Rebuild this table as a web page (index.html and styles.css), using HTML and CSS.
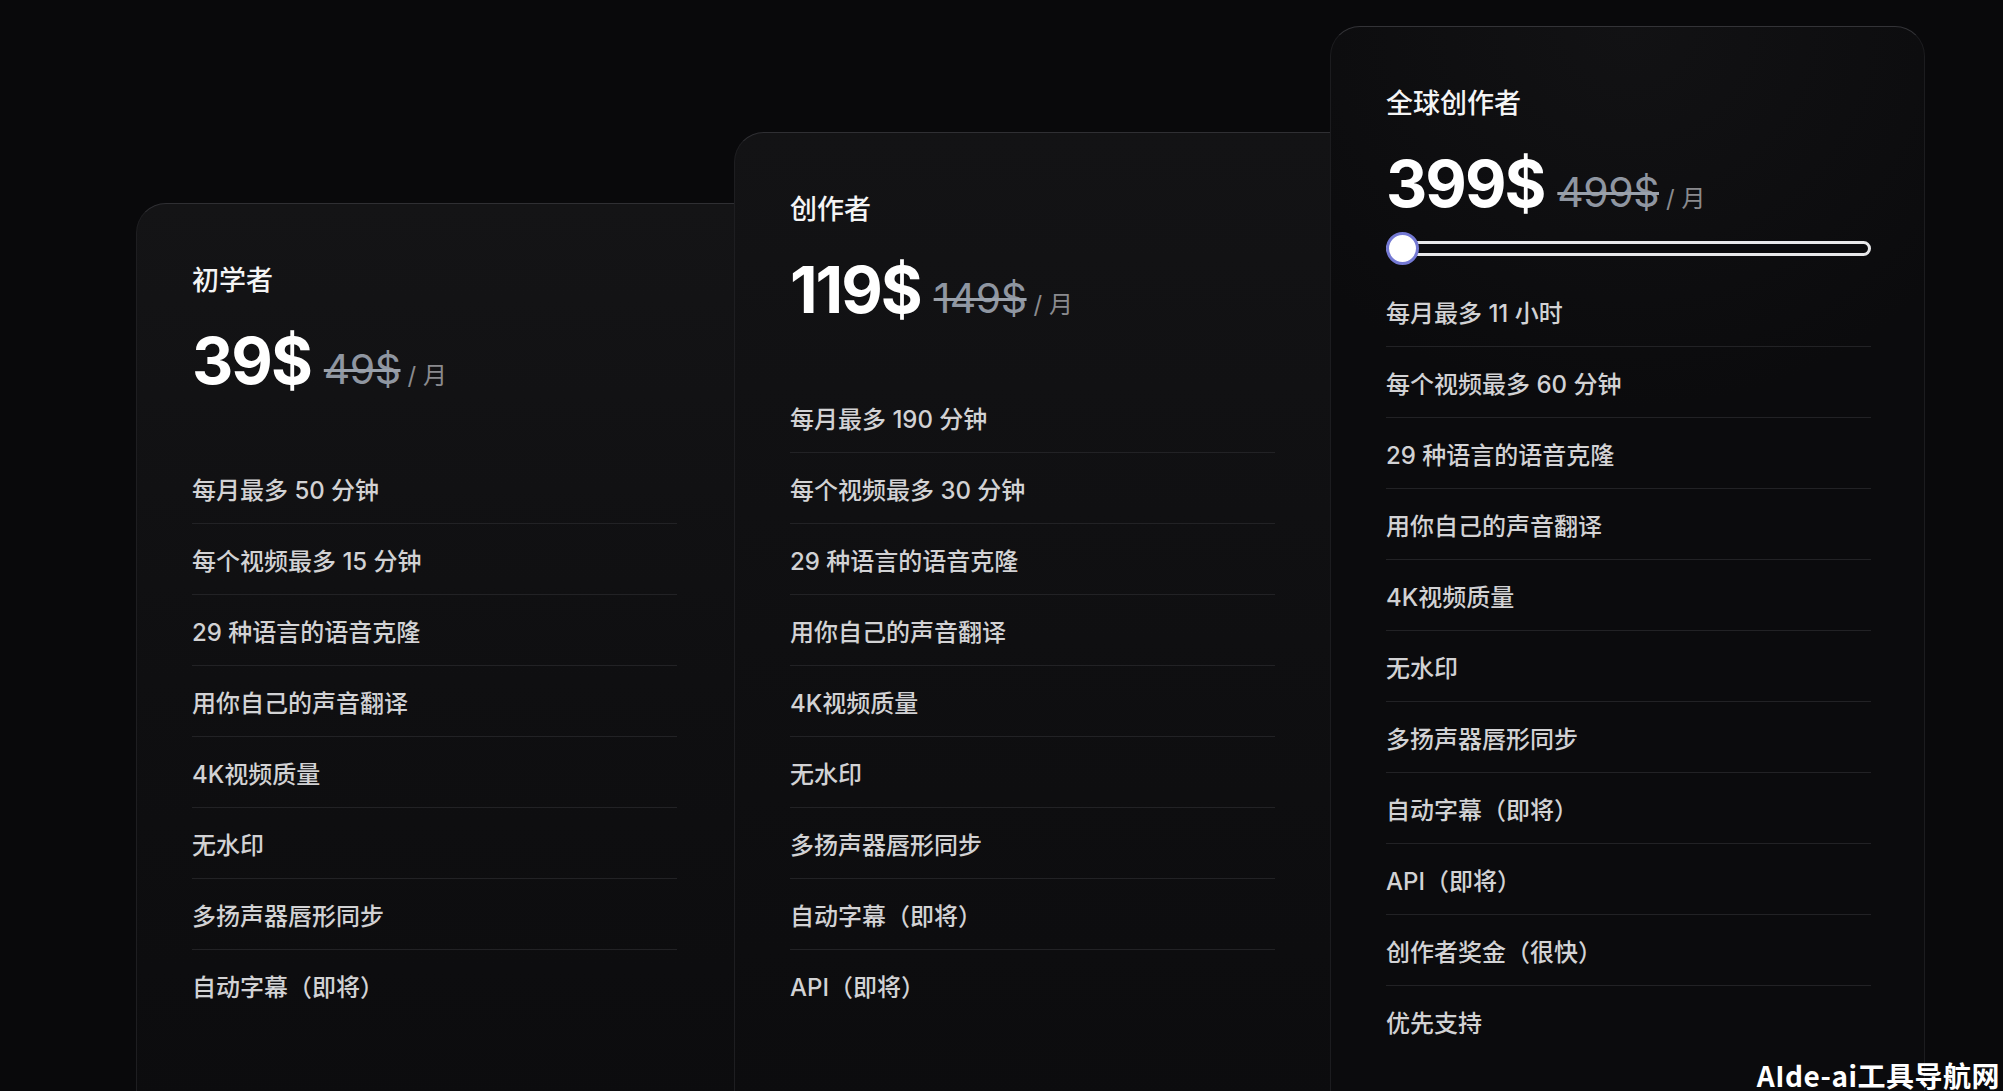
FILE: index.html
```html
<!DOCTYPE html>
<html lang="zh">
<head>
<meta charset="utf-8">
<title>定价</title>
<link rel="stylesheet" href="styles.css">
</head>
<body>
<main class="pricing">
  <section class="card card--starter">
    <h2 class="card-title">初学者</h2>
    <div class="price">
      <span class="price-now">39$</span>
      <span class="price-old">49$</span>
      <span class="price-unit">/ 月</span>
    </div>
    <div class="slider slider--hidden" aria-hidden="true">
      <div class="slider-track"></div>
      <div class="slider-thumb"></div>
    </div>
    <ul class="features">
      <li>每月最多 50 分钟</li>
      <li>每个视频最多 15 分钟</li>
      <li>29 种语言的语音克隆</li>
      <li>用你自己的声音翻译</li>
      <li>4K视频质量</li>
      <li>无水印</li>
      <li>多扬声器唇形同步</li>
      <li>自动字幕（即将）</li>
    </ul>
  </section>

  <section class="card card--creator">
    <h2 class="card-title">创作者</h2>
    <div class="price">
      <span class="price-now">119$</span>
      <span class="price-old">149$</span>
      <span class="price-unit">/ 月</span>
    </div>
    <div class="slider slider--hidden" aria-hidden="true">
      <div class="slider-track"></div>
      <div class="slider-thumb"></div>
    </div>
    <ul class="features">
      <li>每月最多 190 分钟</li>
      <li>每个视频最多 30 分钟</li>
      <li>29 种语言的语音克隆</li>
      <li>用你自己的声音翻译</li>
      <li>4K视频质量</li>
      <li>无水印</li>
      <li>多扬声器唇形同步</li>
      <li>自动字幕（即将）</li>
      <li>API（即将）</li>
    </ul>
  </section>

  <section class="card card--global">
    <h2 class="card-title">全球创作者</h2>
    <div class="price">
      <span class="price-now">399$</span>
      <span class="price-old">499$</span>
      <span class="price-unit">/ 月</span>
    </div>
    <div class="slider">
      <div class="slider-track"></div>
      <div class="slider-thumb"></div>
    </div>
    <ul class="features">
      <li>每月最多 11 小时</li>
      <li>每个视频最多 60 分钟</li>
      <li>29 种语言的语音克隆</li>
      <li>用你自己的声音翻译</li>
      <li>4K视频质量</li>
      <li>无水印</li>
      <li>多扬声器唇形同步</li>
      <li>自动字幕（即将）</li>
      <li>API（即将）</li>
      <li>创作者奖金（很快）</li>
      <li>优先支持</li>
    </ul>
  </section>
</main>
<div class="watermark">AIde-ai工具导航网</div>
</body>
</html>
```

FILE: styles.css
```css
html, body {
  margin: 0;
  padding: 0;
  height: 100%;
}

body {
  background: #09090b;
  color: #ffffff;
  font-family: "Inter", "Noto Sans CJK SC", "Noto Sans", sans-serif;
  overflow: hidden;
  position: relative;
}

.pricing {
  display: flex;
  align-items: flex-start;
  padding-left: 136px;
}

.card {
  box-sizing: border-box;
  width: 640px;
  flex: 0 0 auto;
  margin-right: -42px;
  padding: 57px 98px 240px 55px;
  border: 1px solid #1e1e21;
  border-top-color: #2f2f33;
  border-radius: 30px;
  background: linear-gradient(180deg, #141416 0%, #0f0f11 45%, #0b0b0d 100%);
}

.card--starter { margin-top: 203px; }
.card--creator {
  margin-top: 132px;
  margin-right: -44px;
  background: linear-gradient(180deg, #131315 0%, #0f0f11 45%, #0b0b0d 100%);
}
.card--global {
  width: 595px;
  margin-right: 0;
  padding-right: 53px;
  margin-top: 26px;
  border-color: #1c1c1f;
  border-top-color: #333337;
  background: radial-gradient(ellipse 70% 30% at 50% 0%, #121214 0%, rgba(12,12,14,0) 100%), #0b0b0d;
}

.card-title {
  margin: 0;
  font-family: "Noto Sans CJK SC", sans-serif;
  font-size: 27px;
  font-weight: 500;
  line-height: 36px;
  color: #f4f4f5;
}

.price {
  display: flex;
  align-items: baseline;
  margin-top: 32px;
  height: 64px;
  line-height: 64px;
  white-space: nowrap;
}

.price-now {
  font-family: "Inter", sans-serif;
  font-size: 64px;
  font-weight: 700;
  letter-spacing: -2px;
  color: #ffffff;
}

.price-old {
  margin-left: 13px;
  font-family: "Inter", sans-serif;
  font-size: 41px;
  font-weight: 400;
  letter-spacing: -0.5px;
  color: #8f96a1;
  text-decoration: line-through;
  text-decoration-thickness: 3px;
  text-decoration-color: #9aa1ab;
}

.price-unit {
  margin-left: 7px;
  font-family: "Inter", "Noto Sans CJK SC", sans-serif;
  font-size: 24px;
  color: #8a8a8e;
}

.slider {
  position: relative;
  margin-top: 16px;
  height: 33px;
  display: flex;
  align-items: center;
}

.slider--hidden {
  visibility: hidden;
}

.slider-track {
  box-sizing: border-box;
  width: 100%;
  height: 15px;
  border: 3px solid #e8e8ea;
  border-radius: 8px;
  background: #0b0b0d;
}

.slider-thumb {
  position: absolute;
  left: 0;
  top: 0;
  box-sizing: border-box;
  width: 33px;
  height: 33px;
  border-radius: 50%;
  background: #ffffff;
  border: 3px solid #7479d4;
}

.features {
  list-style: none;
  margin: 11px 0 0 0;
  padding: 0;
}

.features li {
  height: 70px;
  display: flex;
  align-items: center;
  font-family: "Inter", "Noto Sans CJK SC", sans-serif;
  font-size: 24px;
  font-weight: 500;
  color: #d2d2d4;
  border-bottom: 1px solid #222225;
}

.features li:last-child {
  border-bottom: none;
}

.watermark {
  position: absolute;
  right: 3px;
  bottom: -4px;
  font-family: "Noto Sans CJK SC", sans-serif;
  font-size: 28px;
  font-weight: 700;
  color: #ffffff;
  letter-spacing: 0.5px;
}
```
